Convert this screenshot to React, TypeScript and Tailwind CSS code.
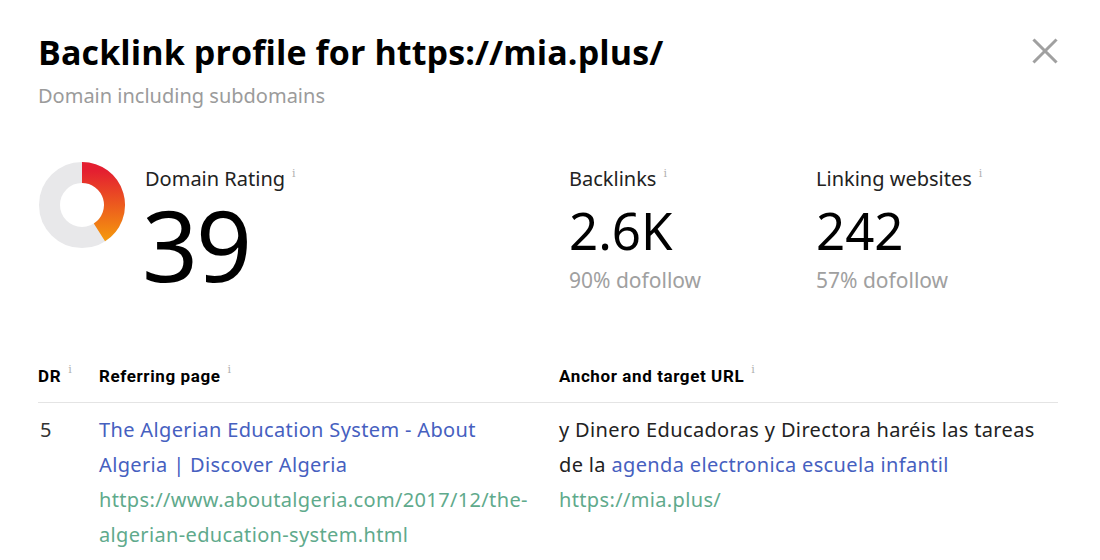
import React from "react";

const Info = () => (
  <span className="ml-[7px] -translate-y-[9px] inline-block text-[11px] text-[#b0b0b0] font-normal leading-none tracking-normal" style={{ fontFamily: "'DejaVu Serif', serif" }}>
    i
  </span>
);

const Donut = () => {
  const r = 32.5;
  const pct = 0.41;
  const a = pct * 2 * Math.PI;
  const ex = 44 + r * Math.sin(a);
  const ey = 44 - r * Math.cos(a);
  return (
    <svg width="88" height="88" viewBox="0 0 88 88" className="shrink-0">
      <defs>
        <linearGradient id="g" gradientUnits="userSpaceOnUse" x1="0" y1="10" x2="0" y2="80">
          <stop offset="0%" stopColor="#e41f30" />
          <stop offset="100%" stopColor="#f59a0c" />
        </linearGradient>
      </defs>
      <circle cx="44" cy="44" r={r} fill="none" stroke="#e8e8ea" strokeWidth="21" />
      <path d={`M44 ${44 - r} A${r} ${r} 0 0 1 ${ex} ${ey}`} fill="none" stroke="url(#g)" strokeWidth="21" />
    </svg>
  );
};

export default function App() {
  return (
    <div
      className="w-[1100px] h-[560px] bg-white overflow-hidden relative px-[38px] pt-[31px] text-[#1a1a1a]"
      style={{ fontFamily: "'Noto Sans', 'Open Sans', sans-serif" }}
    >
      <button className="absolute right-[42px] top-[38px] text-[#a0a0a0]">
        <svg width="26" height="26" viewBox="0 0 26 26" stroke="currentColor" strokeWidth="3" strokeLinecap="square">
          <line x1="2.5" y1="2.5" x2="23.5" y2="23.5" />
          <line x1="23.5" y1="2.5" x2="2.5" y2="23.5" />
        </svg>
      </button>

      <h1 className="text-[34px] font-bold leading-[42px] text-black tracking-[0.1px]" style={{ fontFamily: "'Open Sans', sans-serif" }}>
        Backlink profile for https://mia.plus/
      </h1>
      <div className="text-[20px] text-[#9b9b9b] mt-[10px] leading-[26px]">Domain including subdomains</div>

      <div className="flex mt-[56px] items-start">
        <div className="flex w-[531px] items-start">
          <div className="-mt-[4px]">
            <Donut />
          </div>
          <div className="ml-[19px]">
            <div className="text-[20px] leading-[28px] text-[#222]">
              Domain Rating
              <Info />
            </div>
            <div className="text-[98px] leading-[98px] text-black -ml-[3px] mt-[2px] tracking-[-2px]">39</div>
          </div>
        </div>
        <div className="w-[247px]">
          <div className="text-[20px] leading-[28px] text-[#222]">
            Backlinks
            <Info />
          </div>
          <div className="text-[51px] leading-[56px] text-black mt-[9px]">2.6K</div>
          <div className="text-[21px] leading-[28px] text-[#a0a0a0] mt-[8px]">90% dofollow</div>
        </div>
        <div>
          <div className="text-[20px] leading-[28px] text-[#222]">
            Linking websites
            <Info />
          </div>
          <div className="text-[51px] leading-[56px] text-black mt-[9px]">242</div>
          <div className="text-[21px] leading-[28px] text-[#a0a0a0] mt-[8px]">57% dofollow</div>
        </div>
      </div>

      <div className="mt-[71px] w-[1020px]">
        <div className="flex border-b border-[#e4e4e4] pb-[15px] text-[17px] font-bold text-black leading-[22px] tracking-[0.6px]" style={{ fontFamily: "Roboto, sans-serif" }}>
          <div className="w-[61px]">
            DR
            <Info />
          </div>
          <div className="w-[460px]">
            Referring page
            <Info />
          </div>
          <div>
            Anchor and target URL
            <Info />
          </div>
        </div>
        <div className="flex pt-[9px] text-[20px] leading-[35px] tracking-[0.35px]">
          <div className="w-[61px] pl-[2px] text-[#333]">5</div>
          <div className="w-[460px]">
            <div className="w-[440px]">
              <div className="text-[#4660bf]">The Algerian Education System - About Algeria | Discover Algeria</div>
              <div className="text-[#5faa8c]">https://www.aboutalgeria.com/2017/12/the-algerian-education-system.html</div>
            </div>
          </div>
          <div className="w-[482px]">
            <div className="text-[#222]">
              y Dinero Educadoras y Directora haréis las tareas de la{" "}
              <span className="text-[#4660bf]">agenda electronica escuela infantil</span>
            </div>
            <div className="text-[#5faa8c]">https://mia.plus/</div>
          </div>
        </div>
      </div>
    </div>
  );
}
